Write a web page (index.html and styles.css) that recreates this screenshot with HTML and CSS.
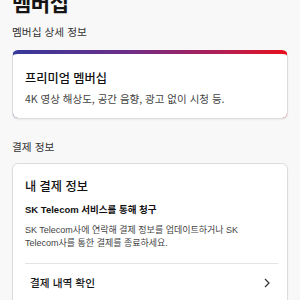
FILE: index.html
```html
<!DOCTYPE html>
<html lang="ko">
<head>
<meta charset="utf-8">
<link rel="stylesheet" href="styles.css">
</head>
<body>
<div class="page">
  <h1 class="title">멤버십</h1>
  <div class="section-label">멤버십 상세 정보</div>
  <div class="card card-premium">
    <div class="card-title">프리미엄 멤버십</div>
    <div class="card-desc">4K 영상 해상도, 공간 음향, 광고 없이 시청 등.</div>
  </div>
  <div class="section-label section-gap">결제 정보</div>
  <div class="card card-pay">
    <div class="card-title">내 결제 정보</div>
    <div class="pay-provider">SK Telecom 서비스를 통해 청구</div>
    <div class="pay-note">SK Telecom사에 연락해 결제 정보를 업데이트하거나 SK Telecom사를 통한 결제를 종료하세요.</div>
    <div class="divider"></div>
    <div class="row">
      <span class="row-label">결제 내역 확인</span>
      <svg class="chev" width="6" height="10" viewBox="0 0 6 10"><path d="M1 1 L5 5 L1 9" fill="none" stroke="#333" stroke-width="1.2"/></svg>
    </div>
  </div>
</div>
</body>
</html>
```

FILE: styles.css
```css
html, body {
  margin: 0;
  padding: 0;
  background: #f8f8f8;
}
body {
  font-family: "Noto Sans CJK KR", "Noto Sans", sans-serif;
  color: #141414;
  overflow: hidden;
}
.page {
  padding: 0 12px;
  margin-top: -12px;
}
.title {
  margin: 0;
  font-size: 21px;
  font-weight: 700;
  line-height: 28px;
  letter-spacing: -0.5px;
}
.section-label {
  margin-top: 8px;
  font-size: 10.7px;
  line-height: 16px;
  color: #333;
}
.section-gap {
  margin-top: 20px;
}
.card {
  background: #fff;
  border: 1px solid #dcdcdc;
  border-radius: 6px;
  box-shadow: 0 1px 2px rgba(0,0,0,0.06);
  margin-top: 10px;
}
.card-premium {
  border-top: 4px solid transparent;
  background:
    linear-gradient(#fff, #fff) padding-box,
    linear-gradient(90deg, #36399a 0%, #6a2f8a 40%, #b01f56 75%, #e8101c 100%) border-box;
  padding: 15px 12px 10px 12px;
  height: 39px;
}
.card-title {
  font-size: 12.2px;
  font-weight: 500;
  line-height: 18px;
  color: #111;
}
.card-desc {
  margin-top: 4px;
  font-size: 10.5px;
  line-height: 16px;
  color: #444;
}
.card-pay {
  margin-top: 8px;
  padding: 13px 12px 0 12px;
  height: 200px;
}
.pay-provider {
  margin-top: 7px;
  font-size: 9.5px;
  font-weight: 700;
  line-height: 16px;
  font-family: "Liberation Sans", "Noto Sans CJK KR", sans-serif;
  color: #111;
}
.pay-note {
  margin-top: 6px;
  max-width: 225px;
  font-size: 9px;
  line-height: 13px;
  color: #444;
  font-family: "Liberation Sans", "Noto Sans CJK KR", sans-serif;
}
.divider {
  margin-top: 13px;
  height: 1px;
  background: #e4e4e4;
  margin-right: -3px;
}
.row {
  display: flex;
  align-items: center;
  justify-content: space-between;
  padding: 11px 5px 0 5px;
}
.row-label {
  font-size: 10.7px;
  font-weight: 500;
  line-height: 16px;
}
```
